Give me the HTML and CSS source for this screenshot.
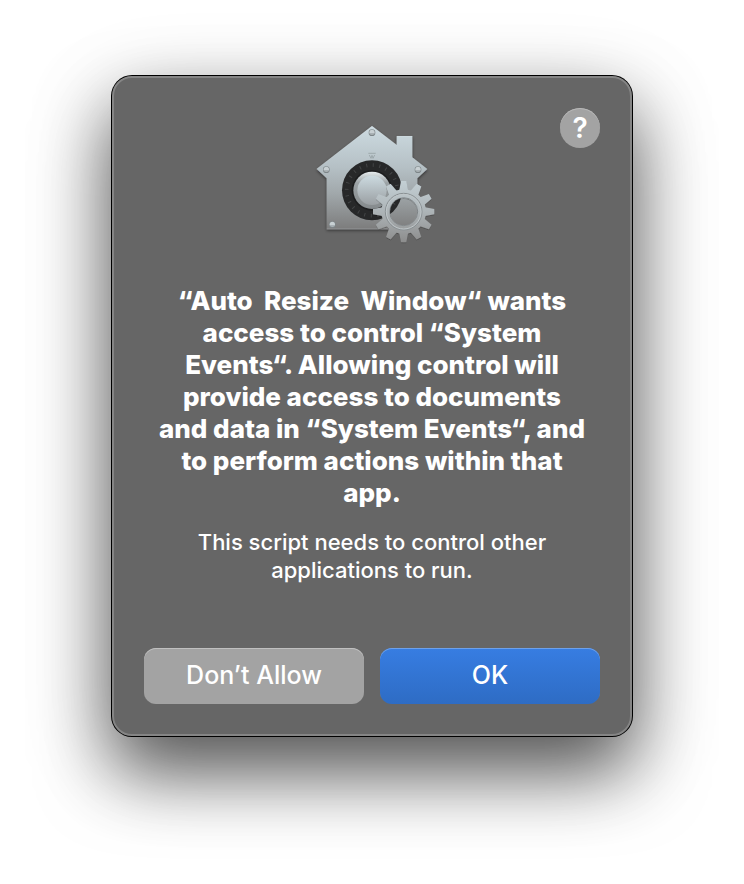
FILE: index.html
```html
<!DOCTYPE html>
<html lang="en">
<head>
<meta charset="utf-8">
<meta name="viewport" content="width=device-width, initial-scale=1">
<title>Automation permission</title>
<link rel="stylesheet" href="styles.css">
</head>
<body>
<main class="dialog" role="alertdialog" aria-labelledby="dialog-title" aria-describedby="dialog-text">
  <button class="help" type="button" aria-label="Help">?</button>
  <svg class="icon" viewBox="-9 0 420 420" aria-hidden="true">
    <defs>
      <linearGradient id="metal" gradientUnits="userSpaceOnUse" x1="0" y1="33" x2="0" y2="343">
        <stop offset="0" stop-color="#cddbe1"/>
        <stop offset=".4" stop-color="#b5c0c5"/>
        <stop offset=".65" stop-color="#a1a8ab"/>
        <stop offset="1" stop-color="#7c7c7c"/>
      </linearGradient>
      <linearGradient id="gear" x1="0" y1="0" x2="0" y2="1">
        <stop offset="0" stop-color="#c4d0d5"/>
        <stop offset=".5" stop-color="#adb4b7"/>
        <stop offset="1" stop-color="#8c8c8c"/>
      </linearGradient>
      <linearGradient id="knob" x1="0" y1="0" x2="0" y2="1">
        <stop offset="0" stop-color="#ccdae0"/>
        <stop offset="1" stop-color="#9a9fa2"/>
      </linearGradient>
      <linearGradient id="rim" x1="0" y1="0" x2="0" y2="1">
        <stop offset="0" stop-color="#e6ecee"/>
        <stop offset=".3" stop-color="#9ba2a5"/>
        <stop offset="1" stop-color="#858a8c"/>
      </linearGradient>
      <filter id="shade" x="-20%" y="-20%" width="140%" height="140%">
        <feDropShadow dx="0" dy="4" stdDeviation="4" flood-color="#000" flood-opacity=".5"/>
      </filter>
      <filter id="gear-shade" x="-20%" y="-20%" width="140%" height="140%">
        <feDropShadow dx="0" dy="2" stdDeviation="2" flood-color="#000" flood-opacity=".35"/>
      </filter>
      <g id="screw">
        <circle r="10" fill="#7d8588"/>
        <circle cy="-1" r="8" fill="#c8d0d3"/>
        <path d="M-7 4H7" stroke="#8b9396" stroke-width="3"/>
      </g>
      <path id="tooth" d="M-14-60L-8-92H8L14-60Z"/>
      <mask id="gear-shape" maskUnits="userSpaceOnUse" x="-100" y="-100" width="200" height="200">
        <g fill="#fff">
          <circle r="67"/>
          <use href="#tooth"/>
          <use href="#tooth" transform="rotate(30)"/>
          <use href="#tooth" transform="rotate(60)"/>
          <use href="#tooth" transform="rotate(90)"/>
          <use href="#tooth" transform="rotate(120)"/>
          <use href="#tooth" transform="rotate(150)"/>
          <use href="#tooth" transform="rotate(180)"/>
          <use href="#tooth" transform="rotate(210)"/>
          <use href="#tooth" transform="rotate(240)"/>
          <use href="#tooth" transform="rotate(270)"/>
          <use href="#tooth" transform="rotate(300)"/>
          <use href="#tooth" transform="rotate(330)"/>
        </g>
        <circle r="41" fill="#000"/>
      </mask>
    </defs>
    <path d="M201 33L275 90V63H322V127L367 162L337 190V343H65V190L35 162Z" fill="url(#metal)" filter="url(#shade)"/>
    <path d="M35 162L201 34L275 90M276 64H322M65 342H337" fill="none" stroke="#e4edf0" stroke-opacity=".35" stroke-width="2"/>
    <use href="#screw" x="201" y="53"/>
    <use href="#screw" x="64" y="164"/>
    <use href="#screw" x="339" y="164"/>
    <use href="#screw" x="82" y="329"/>
    <path d="M190 115H212M193 120L198 130L201 121L204 130L209 120" fill="none" stroke="#8e989c" stroke-width="2"/>
    <circle cx="201" cy="226" r="90" fill="#272829"/>
    <circle cx="201" cy="226" r="76" fill="none" stroke="#434546" stroke-width="11" stroke-dasharray="3 16.9"/>
    <circle cx="201" cy="226" r="61" fill="#1c1d1e"/>
    <circle cx="201" cy="226" r="56" fill="url(#rim)"/>
    <circle cx="201" cy="226" r="44" fill="url(#knob)"/>
    <g transform="translate(296 290)" filter="url(#gear-shade)">
      <g mask="url(#gear-shape)">
        <circle r="94" fill="url(#gear)"/>
        <circle r="55" fill="none" stroke="#899093" stroke-width="3"/>
        <circle r="52" fill="none" stroke="#bfc6c9" stroke-width="3"/>
        <circle r="42" fill="none" stroke="#868c8f" stroke-width="3"/>
      </g>
    </g>
  </svg>
  <h1 class="title" id="dialog-title">“Auto&nbsp; Resize&nbsp; Window“ wants access to control “System Events“. Allowing control will provide access to documents and data in “System Events“, and to perform actions within that app.</h1>
  <p class="text" id="dialog-text">This script needs to control other applications to run.</p>
  <div class="actions">
    <button class="button" type="button">Don’t Allow</button>
    <button class="button primary" type="button">OK</button>
  </div>
</main>
</body>
</html>
```
FILE: styles.css
```css
* {
  box-sizing: border-box;
}

body {
  margin: 0;
  padding: 76px 16px 148px;
  background: #fff;
  color: #fff;
  font-family: Inter, "Liberation Sans", sans-serif;
}

.dialog {
  position: relative;
  display: flex;
  flex-direction: column;
  align-items: center;
  max-width: 520px;
  margin: 0 auto;
  padding: 37px 30px 30px;
  border: 2px solid #858585;
  border-radius: 20px;
  background: #666;
  box-shadow:
    0 0 0 1px #000,
    0 36px 72px rgba(0, 0, 0, .6),
    0 24px 90px rgba(0, 0, 0, .2);
}

.help {
  position: absolute;
  top: 30px;
  right: 30px;
  width: 40px;
  height: 40px;
  padding: 0;
  border: 0;
  border-radius: 50%;
  background: #a3a3a3;
  box-shadow: inset 0 1px #b8b8b8;
  color: #fff;
  font: 600 28px/40px Inter, "Liberation Sans", sans-serif;
}

.icon {
  display: block;
  width: 140px;
  height: 140px;
}

.title {
  max-width: 432px;
  margin: 30px 0 0;
  font-size: 26px;
  font-weight: 800;
  line-height: 32px;
  text-align: center;
}

.text {
  max-width: 432px;
  margin: 19px 0 0;
  font-size: 22px;
  font-weight: 500;
  line-height: 28px;
  text-align: center;
}

.actions {
  display: grid;
  grid-template-columns: 1fr 1fr;
  gap: 16px;
  width: 100%;
  margin-top: 64px;
}

.button {
  height: 56px;
  padding: 0 8px 2px;
  border: 0;
  border-radius: 12px;
  background: #a3a3a3;
  box-shadow: inset 0 1px #c0c0c0;
  color: #fff;
  font: 500 25px/32px Inter, "Liberation Sans", sans-serif;
}

.primary {
  background: linear-gradient(#377de2, #2e6cc4);
  box-shadow: inset 0 1px #6ea1ea;
}
```
